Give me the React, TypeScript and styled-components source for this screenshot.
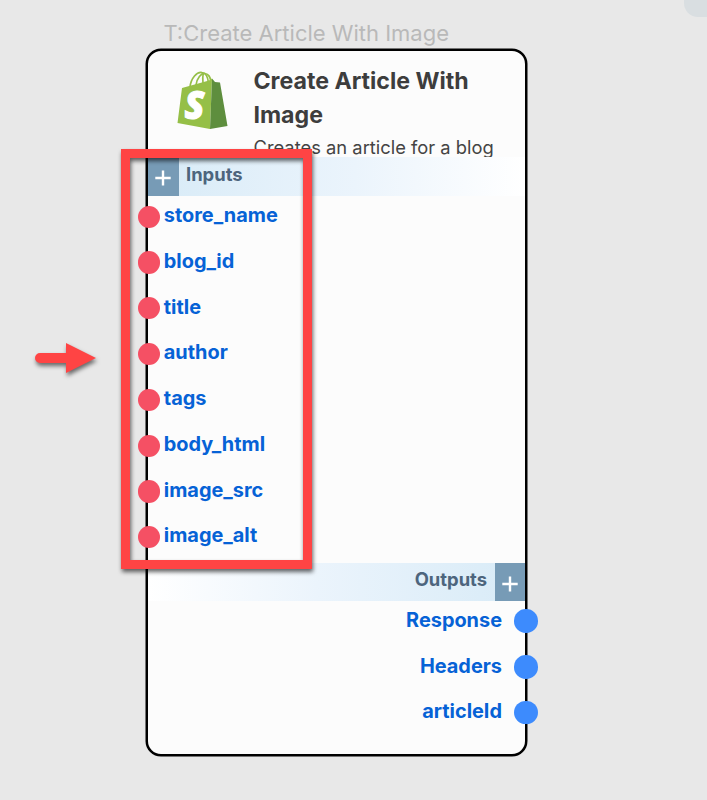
import React from "react";
import styled, { createGlobalStyle } from "styled-components";

const GlobalStyle = createGlobalStyle`
  *, *::before, *::after { box-sizing: border-box; }
  body { margin: 0; background: #e8e8e8; font-family: Inter, sans-serif; }
`;

const Canvas = styled.main`
  position: relative;
  width: 707px;
  height: 800px;
  overflow: hidden;
  background: #e8e8e8;
`;

const CornerPanel = styled.div`
  position: absolute;
  top: -23px;
  left: 684px;
  width: 60px;
  height: 40px;
  border-radius: 14px;
  background: #d9dee1;
`;

const NodeGroup = styled.section`
  position: absolute;
  left: 146px;
  top: 19px;
  width: 381px;
`;

const NodeCaption = styled.div`
  height: 30px;
  padding-left: 17.5px;
  font-size: 22px;
  line-height: 28px;
  color: #b9b9b9;
  white-space: nowrap;
`;

const NodeCard = styled.div`
  display: flex;
  flex-direction: column;
  height: 706.5px;
  width: 381px;
  border: 2px solid #000;
  border-radius: 15px;
  background: #fcfcfc;
  box-shadow: 0 0 0 0.5px #000;
`;

const Header = styled.header`
  display: flex;
  flex: none;
  height: 106px;
  padding: 12.5px 0 0 28.5px;
  overflow: hidden;
`;

const Logo = styled.svg`
  flex: none;
  width: 52px;
  height: 60px;
  margin: 6px 25px 0 0;
`;

const HeaderText = styled.div`
  width: 245px;
`;

const Heading = styled.h1`
  margin: 0;
  font-size: 23.15px;
  line-height: 34px;
  font-weight: 700;
  color: #3d3d3d;
`;

const Description = styled.p`
  margin: 0;
  font-size: 18.35px;
  line-height: 31px;
  color: #444;
  white-space: nowrap;
`;

const Band = styled.div<{ $side: "left" | "right" }>`
  display: flex;
  flex: none;
  flex-direction: ${(p) => (p.$side === "left" ? "row" : "row-reverse")};
  height: ${(p) => (p.$side === "left" ? 39 : 38)}px;
  background: linear-gradient(
    to ${(p) => (p.$side === "left" ? "right" : "left")},
    #d8ebf7, #ebf4fc 55%, #ffffff
  );
`;

const AddButton = styled.button`
  display: flex;
  flex: none;
  align-items: center;
  justify-content: center;
  width: 30.5px;
  height: 100%;
  padding: 3px 0 0;
  border: 0;
  background: #779bb6;
`;

const BandLabel = styled.span<{ $line: number }>`
  padding: 0 7.5px;
  font-size: 18.4px;
  line-height: ${(p) => p.$line}px;
  font-weight: 700;
  color: #4d657d;
`;

const PortList = styled.ul<{ $side: "left" | "right" }>`
  flex: none;
  height: ${(p) => (p.$side === "left" ? "367px" : "auto")};
  margin: 0;
  padding: 0;
  list-style: none;
`;

const Port = styled.li<{ $side: "left" | "right" }>`
  display: flex;
  align-items: center;
  flex-direction: ${(p) => (p.$side === "left" ? "row" : "row-reverse")};
  gap: ${(p) => (p.$side === "left" ? 3.5 : 12)}px;
  height: 45.8px;
  margin: ${(p) => (p.$side === "left" ? "0 0 0 -10px" : "0 -12.5px 0 0")};

  &:first-child {
    margin-top: ${(p) => (p.$side === "left" ? -2.2 : -2.8)}px;
  }
`;

const Dot = styled.span<{ $color: string; $size: number }>`
  flex: none;
  width: ${(p) => p.$size}px;
  height: ${(p) => p.$size}px;
  border-radius: 50%;
  background: ${(p) => p.$color};
`;

const PortName = styled.span<{ $lift: number }>`
  padding-bottom: ${(p) => p.$lift}px;
  font-size: 19.9px;
  line-height: 26px;
  font-weight: 700;
  color: #0662d6;
`;

const Highlight = styled.div`
  position: absolute;
  left: 121px;
  top: 149px;
  width: 191px;
  height: 420px;
  border: 9px solid #ff4444;
  filter: drop-shadow(1px 3px 2px rgba(0, 0, 0, 0.6));
`;

const Arrow = styled.svg`
  position: absolute;
  left: 30px;
  top: 335px;
  width: 75px;
  height: 50px;
  overflow: visible;
  filter: drop-shadow(1px 3px 2px rgba(0, 0, 0, 0.55));
`;

const inputs = ["store_name", "blog_id", "title", "author", "tags", "body_html", "image_src", "image_alt"];
const outputs = ["Response", "Headers", "articleId"];

function PlusIcon() {
  return (
    <svg width="16" height="16" viewBox="0 0 16 16" stroke="#fff" strokeWidth="2.4">
      <path d="M8 .5v15M.3 8h15.400" />
    </svg>
  );
}

function ShopLogo() {
  return (
    <Logo viewBox="0 0 52 60">
      <g fill="none" stroke="#95bf47" strokeWidth="1.7">
        <path d="M13 17C14 8 20 1.500 25 2.500C29 3 31 8 31.500 13" />
        <path d="M19 15C20 8 24 3 28 3.500C32 4 33 7 34 11" />
        <path d="M27 3C25 5 26 9 26 14" />
      </g>
      <path d="M5 18L32 10.500L35 8.500L33 59L.5 53Z" fill="#95bf47" />
      <path d="M35 8.500L38 12L43 12.500L50.500 56L33 59Z" fill="#5e8e3e" />
      <text x="7.500" y="49" fill="#fff" stroke="#fff" strokeWidth="1" fontFamily="Open Sans, sans-serif" fontSize="38" fontWeight="800" fontStyle="italic" textLength="20" lengthAdjust="spacingAndGlyphs">S</text>
    </Logo>
  );
}

export default function App() {
  return (
    <Canvas>
      <GlobalStyle />
      <CornerPanel />
      <NodeGroup>
        <NodeCaption>T:Create Article With Image</NodeCaption>
        <NodeCard>
          <Header>
            <ShopLogo />
            <HeaderText>
              <Heading>Create Article With Image</Heading>
              <Description>Creates an article for a blog</Description>
            </HeaderText>
          </Header>
          <Band $side="left">
            <AddButton aria-label="Add input"><PlusIcon /></AddButton>
            <BandLabel $line={35}>Inputs</BandLabel>
          </Band>
          <PortList $side="left">
            {inputs.map((name) => (
              <Port key={name} $side="left">
                <Dot $color="#f55064" $size={22.3} />
                <PortName $lift={3.6}>{name}</PortName>
              </Port>
            ))}
          </PortList>
          <Band $side="right">
            <AddButton aria-label="Add output"><PlusIcon /></AddButton>
            <BandLabel $line={33}>Outputs</BandLabel>
          </Band>
          <PortList $side="right">
            {outputs.map((name) => (
              <Port key={name} $side="right">
                <Dot $color="#3d8bfd" $size={23.5} />
                <PortName $lift={2.5}>{name}</PortName>
              </Port>
            ))}
          </PortList>
        </NodeCard>
      </NodeGroup>
      <Highlight />
      <Arrow viewBox="0 0 75 50" fill="#ff4444">
        <path d="M10 18H36V8L66 23L36 38V28H10A5 5 0 0 1 10 18Z" />
      </Arrow>
    </Canvas>
  );
}
